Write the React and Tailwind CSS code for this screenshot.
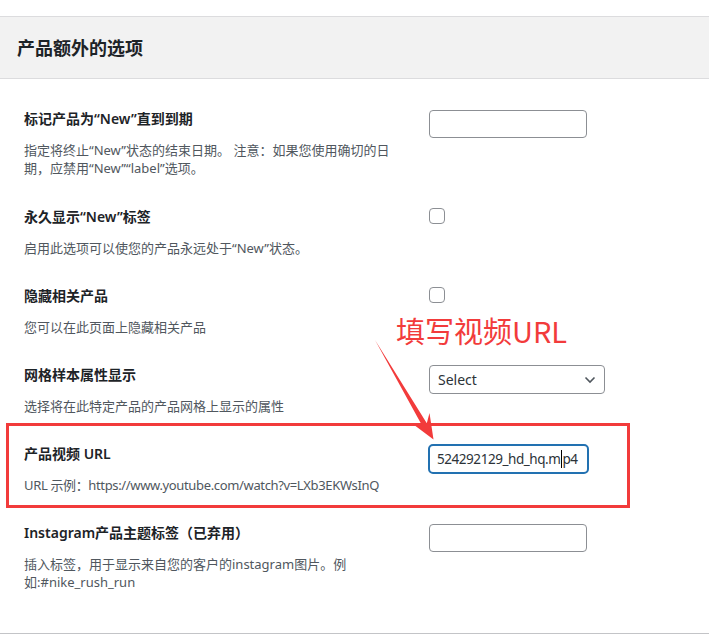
import React from 'react';

const rows = [
    {
        label: '标记产品为“New”直到到期',
        desc: '指定将终止“New”状态的结束日期。 注意：如果您使用确切的日期，应禁用“New”“label”选项。',
        control: 'text',
    },
    {
        label: '永久显示“New”标签',
        desc: '启用此选项可以使您的产品永远处于“New”状态。',
        control: 'checkbox',
    },
    {
        label: '隐藏相关产品',
        desc: '您可以在此页面上隐藏相关产品',
        control: 'checkbox',
    },
    {
        label: '网格样本属性显示',
        desc: '选择将在此特定产品的产品网格上显示的属性',
        control: 'select',
    },
    {
        label: '产品视频 URL',
        desc: 'URL 示例：https://www.youtube.com/watch?v=LXb3EKWsInQ',
        descClass: 'tracking-[-0.35px]',
        control: 'focused',
        highlight: true,
    },
    {
        label: 'Instagram产品主题标签（已弃用）',
        desc: '插入标签，用于显示来自您的客户的instagram图片。例如:#nike_rush_run',
        control: 'text',
    },
];

const Control = ({ type }) => {
    if (type === 'checkbox') {
        return <div className="mt-px w-4 h-4 border border-[#8c8f94] rounded-[4px] bg-white"></div>;
    }
    if (type === 'select') {
        return (
            <div className="w-[176px] h-[29px] border border-[#8c8f94] rounded-[4px] bg-white flex items-center justify-between pl-[8px] pr-[8px]">
                <span className="text-[14px] text-[#2c3338]">Select</span>
                <svg width="12" height="8" viewBox="0 0 12 8" fill="none">
                    <path d="M1.5 1.5 6 6l4.5-4.5" stroke="#50575e" strokeWidth="1.6" />
                </svg>
            </div>
        );
    }
    if (type === 'focused') {
        return (
            <div className="-ml-px w-[161px] h-[30px] border-2 border-[#2271b1] rounded-[5px] bg-white flex items-center pl-[7px] overflow-hidden">
                <span className="text-[13.5px] text-[#2c3338] whitespace-nowrap tracking-[-0.45px]">
                    524292129_hd_hq.m<span className="inline-block w-px h-[18px] bg-black align-middle -mt-[2px] mx-[0.5px]"></span>p4
                </span>
            </div>
        );
    }
    return <div className="mt-px w-[158px] h-[28px] border border-[#8c8f94] rounded-[4px] bg-white"></div>;
};

const App = () => {
    return (
        <div className="relative w-[709px] h-[635px] bg-white overflow-hidden font-['Noto_Sans','Noto_Sans_CJK_SC',sans-serif]">
            <div className="h-[17px] border-b border-[#dcdcde]"></div>
            <div className="h-[62px] bg-[#f2f2f2] border-b border-[#dcdcde] flex items-center px-[17px]">
                <h2 className="text-[18px] font-bold text-[#1d2327] font-['Noto_Sans_CJK_SC',sans-serif]">产品额外的选项</h2>
            </div>

            <div className="pt-[15px] pb-[28px] border-b border-[#c3c4c7]">
                {rows.map((row, i) => (
                    <div key={i} className={`relative flex px-[24px] pt-[15px] ${i === 0 ? 'pb-[15px]' : 'pb-[14px]'}`}>
                        {row.highlight && (
                            <div className="absolute top-[-6px] bottom-0 left-[6px] right-[79px] border-[3px] border-[#f23b3b]"></div>
                        )}
                        <div className="w-[405px] pr-[28px]">
                            <div className="text-[14px] leading-[20px] font-semibold text-[#1d2327]">{row.label}</div>
                            <p className={`mt-[12px] text-[13px] leading-[18px] text-[#50575e] ${row.descClass || ''}`}>{row.desc}</p>
                        </div>
                        <div>
                            <Control type={row.control} />
                        </div>
                    </div>
                ))}
            </div>

            {/* annotation */}
            <div className="absolute left-[396px] top-[312px] text-[29px] leading-[36px] text-[#f23b3b] font-['Noto_Sans_CJK_SC',sans-serif]">
                填写视频URL
            </div>
            <svg className="absolute left-0 top-0 pointer-events-none" width="709" height="635">
                <polygon
                    points="375,340 426.8,423.2 429.5,413 433.5,439.5 412.5,423.8 422.2,425.8"
                    fill="#f23b3b"
                />
            </svg>
        </div>
    );
};

export default App;
